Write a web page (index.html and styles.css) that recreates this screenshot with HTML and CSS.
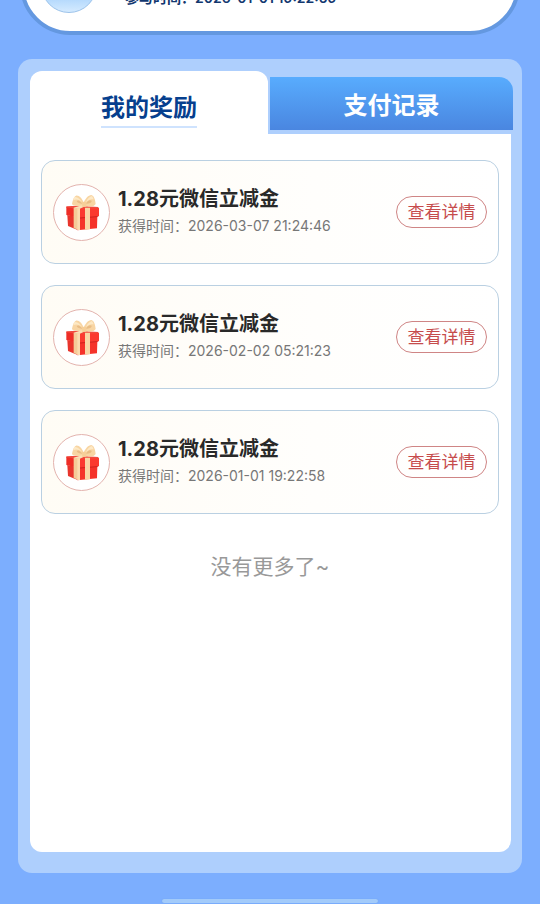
FILE: index.html
```html
<!DOCTYPE html>
<html lang="zh-CN">
<head>
<meta charset="utf-8">
<meta name="viewport" content="width=device-width, initial-scale=1">
<title>我的奖励</title>
<link rel="stylesheet" href="styles.css">
</head>
<body>
<svg class="defs" aria-hidden="true">
  <symbol id="gift" viewBox="0 0 150 150">
    <path fill="#e8352c" d="M31 84l31 6v39l-29-12z"/>
    <path fill="#f5332b" d="M61 88h60l-1 36-59 6z"/>
    <path fill="#f04a3e" d="M28 58l34-2 62 4 1 5-62 2-35-4z"/>
    <path fill="#ee2d26" d="M28 61l34 4v27l-34-8z"/>
    <path fill="#fb3a30" d="M61 65l65-2v25l-65 5z"/>
    <path fill="#cf211c" d="M61 92l61-5v3l-61 5z"/>
    <path fill="#f5cb98" d="M50 62l13 2v64l-13-5z"/>
    <path fill="#fbdcb0" d="M61 64h8v65h-8z"/>
    <path fill="#f9d5a5" d="M84 62h15v65l-15 1z"/>
    <path fill="#fbe0b7" d="M50 62l26-8 8 4-17 8z"/>
    <path fill="#f8d5a3" d="M80 55C68 58 48 58 45 51c2-10 5-22 12-25 9-2 18 8 23 20 5-11 14-22 23-22 8 2 12 15 13 27-3 7-18 10-27 6z"/>
    <path fill="#e9bd86" d="M76 51c-7-1-16-4-17-8 3-5 12-2 17 8zm11-1c4-9 11-13 17-9 1 5-7 9-17 9z"/>
    <path fill="#fde9c6" d="M51 31c9-3 18 5 23 14-9-8-17-9-25-5zm36 14c4-9 11-17 18-18l5 10c-9-2-16 2-23 8z"/>
    <path fill="#f6cf98" d="M75 45h12l2 14-13 1z"/>
  </symbol>
</svg>
<div class="page">
  <header class="profile">
    <div class="avatar"></div>
    <p class="profile-time">参与时间：2026-01-01 19:22:59</p>
  </header>
  <main class="panel">
    <nav class="tabs">
      <button class="tab tab-active" type="button"><span class="tab-label">我的奖励</span></button>
      <button class="tab tab-other" type="button">支付记录</button>
    </nav>
    <section class="content">
      <ul class="rewards">
        <li class="reward">
          <div class="reward-icon"><svg class="gift"><use href="#gift"/></svg></div>
          <div class="reward-text">
            <h2 class="reward-title">1.28元微信立减金</h2>
            <p class="reward-time">获得时间：2026-03-07 21:24:46</p>
          </div>
          <button class="detail" type="button">查看详情</button>
        </li>
        <li class="reward">
          <div class="reward-icon"><svg class="gift"><use href="#gift"/></svg></div>
          <div class="reward-text">
            <h2 class="reward-title">1.28元微信立减金</h2>
            <p class="reward-time">获得时间：2026-02-02 05:21:23</p>
          </div>
          <button class="detail" type="button">查看详情</button>
        </li>
        <li class="reward">
          <div class="reward-icon"><svg class="gift"><use href="#gift"/></svg></div>
          <div class="reward-text">
            <h2 class="reward-title">1.28元微信立减金</h2>
            <p class="reward-time">获得时间：2026-01-01 19:22:58</p>
          </div>
          <button class="detail" type="button">查看详情</button>
        </li>
      </ul>
      <p class="end">没有更多了~</p>
    </section>
  </main>
  <div class="home-bar"></div>
</div>
</body>
</html>
```
FILE: styles.css
```css
* {
  box-sizing: border-box;
}

body,
h2,
p,
ul {
  margin: 0;
  padding: 0;
}

body {
  background: #7caefe;
  font-family: Inter, "Noto Sans CJK SC", sans-serif;
}

button {
  margin: 0;
  padding: 0;
  border: 0;
  font-family: inherit;
  cursor: pointer;
}

.defs {
  display: none;
}

.page {
  display: flex;
  flex-direction: column;
  height: 100vh;
  overflow: hidden;
}

.profile {
  display: flex;
  flex-shrink: 0;
  align-items: flex-end;
  gap: 28px;
  min-height: 128px;
  margin: -93px 20px 24px;
  padding: 0 17px 18px;
  border: 4px solid #6498e0;
  border-radius: 50px;
  background: #fff;
}

.avatar {
  width: 56px;
  height: 56px;
  border: 1px solid #9cc3ea;
  border-radius: 50%;
  background: linear-gradient(#8fc4fa 50%, #d5ebff);
}

.profile-time {
  padding-bottom: 5px;
  color: #12376f;
  font-size: 14px;
  line-height: 20px;
  font-weight: 600;
}

.panel {
  display: flex;
  flex: 1;
  flex-direction: column;
  margin: 0 18px;
  padding: 12px 11px 21px 12px;
  border-radius: 14px;
  background: #aecffd;
}

.tabs {
  display: flex;
  align-items: flex-end;
  margin-right: -2px;
}

.tab {
  font-size: 24px;
  line-height: 36px;
  font-weight: 700;
}

.tab-active {
  flex: 49;
  height: 63px;
  padding-top: 12px;
  border-radius: 12px 12px 0 0;
  background: #fff;
  color: #063f8e;
}

.tab-label {
  display: inline-block;
  border-bottom: 2px solid #cfe3fe;
}

.tab-other {
  flex: 50;
  height: 57px;
  padding-top: 4px;
  border: solid #aecffd;
  border-width: 0 0 4px 2px;
  border-radius: 0 14px 0 0;
  background: linear-gradient(#58acfe, #4a86e0) padding-box;
  color: #fff;
}

.content {
  flex: 1;
  padding: 26px 12px 0 11px;
  border-radius: 0 0 12px 12px;
  background: #fff;
}

.rewards {
  display: grid;
  gap: 21px;
  list-style: none;
}

.reward {
  display: flex;
  align-items: center;
  gap: 8px;
  min-height: 104px;
  padding: 0 11px;
  border: 1px solid #bad0e2;
  border-radius: 14px;
  background: linear-gradient(90deg, #fffcf5, #fffefc 60%, #fff);
}

.reward-icon {
  display: grid;
  flex-shrink: 0;
  place-items: center;
  width: 57px;
  height: 57px;
  border: 1px solid #e3b3ae;
  border-radius: 50%;
  background: #fff;
}

.gift {
  width: 50px;
  height: 50px;
}

.reward-text {
  flex: 1;
}

.reward-title {
  color: #292929;
  font-size: 20px;
  line-height: 28px;
  font-weight: 700;
}

.reward-time {
  color: #777;
  font-size: 14px;
  line-height: 26px;
}

.detail {
  width: 91px;
  height: 32px;
  border: 1px solid #cf8585;
  border-radius: 16px;
  background: transparent;
  color: #c64c4c;
  font-size: 17px;
  line-height: 24px;
}

.end {
  margin-top: 37px;
  color: #999;
  font-size: 21px;
  line-height: 32px;
  text-align: center;
}

.home-bar {
  flex-shrink: 0;
  width: 40%;
  height: 4px;
  margin: 26px auto 1px;
  border-radius: 2px;
  background: #a3cbfa;
  box-shadow: 0 0 1px #6799e3;
}
```
